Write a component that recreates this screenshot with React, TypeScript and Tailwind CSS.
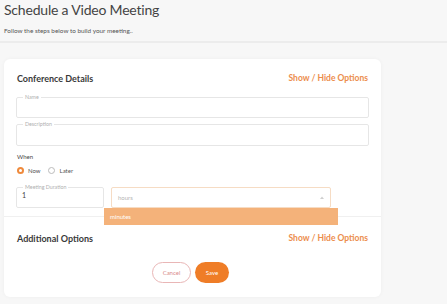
import React from "react";

function Field({ label, className = "", children }: { label: string; className?: string; children?: React.ReactNode }) {
    return (
        <fieldset className={`h-[23.5px] rounded-[2px] border border-[#e6e6e6] px-[5px] ${className}`}>
            <legend className="ml-[1px] px-[2px] text-[5.3px] leading-[5px] text-[#b0b0b0]">{label}</legend>
            {children}
        </fieldset>
    );
}

function SectionHead({ title }: { title: string }) {
    return (
        <div className="flex items-center justify-between px-[13px]">
            <span className="text-[9px] font-bold text-[#3a3a3a]">{title}</span>
            <span className="text-[8.5px] font-bold text-[#ec8d4c]">Show / Hide Options</span>
        </div>
    );
}

export default function App() {
    return (
        <div className="h-[304px] w-[447px] overflow-hidden bg-[#f7f7f7] font-['Lato',sans-serif]">
            <div className="h-[41px] px-[4px]">
                <h1 className="text-[14px] leading-[20px] tracking-[-0.2px] text-[#444]">Schedule a Video Meeting</h1>
                <p className="mt-[6px] text-[6.4px] text-[#555]">Follow the steps below to build your meeting..</p>
            </div>
            <div className="h-[2px] bg-[#ececec]" />

            <div className="mx-[4px] mt-[16px] w-[377px] rounded-[6px] bg-white pb-[14px] pt-[13px] shadow-[0_0_4px_rgba(0,0,0,0.04)]">
                <SectionHead title="Conference Details" />

                <div className="flex flex-col gap-[4px] px-[12px] pt-[9px]">
                    <Field label="Name" />
                    <Field label="Description" />
                </div>

                <div className="px-[13px] pt-[6px] text-[6px] text-[#444]">When</div>
                <div className="flex items-center px-[13px] pt-[5px] text-[6px] text-[#555]">
                    <span className="flex h-[7px] w-[7px] items-center justify-center rounded-full bg-[#ef8a3c]">
                        <span className="h-[3px] w-[3px] rounded-full bg-white" />
                    </span>
                    <span className="ml-[4px]">Now</span>
                    <span className="ml-[7px] h-[7px] w-[7px] rounded-full border border-[#bbb]" />
                    <span className="ml-[5px]">Later</span>
                </div>

                <div className="relative flex gap-[7px] px-[12px] pt-[10px]">
                    <Field label="Meeting Duration" className="w-[88px]">
                        <span className="block text-[7px] leading-[10px] text-[#444]">1</span>
                    </Field>
                    <div className="mt-[2.5px] flex h-[21px] w-[220px] items-center justify-between rounded-[2px] border border-[#f6dcc4] px-[6px]">
                        <span className="text-[6px] text-[#b5b5b5]">hours</span>
                        <svg width="4" height="3" viewBox="0 0 4 3">
                            <path d="M0 3 L2 0.5 L4 3 Z" fill="#cfcfcf" />
                        </svg>
                    </div>
                    <div className="absolute left-[100px] top-[33.5px] flex h-[17px] w-[234px] items-center bg-[#f4b27a] px-[6px] text-[6px] text-white">
                        minutes
                    </div>
                </div>

                <div className="mt-[8px] h-[1px] bg-[#f0f0f0]" />

                <div className="pt-[15px]">
                    <SectionHead title="Additional Options" />
                </div>

                <div className="flex justify-center gap-[4px] pr-[4px] pt-[16px]">
                    <button className="h-[21px] w-[39px] rounded-full border border-[#e9b6b6] text-[6px] text-[#d98a8a]">Cancel</button>
                    <button className="h-[21px] w-[34px] rounded-full bg-[#ef7d27] text-[6px] text-white">Save</button>
                </div>
            </div>
        </div>
    );
}
